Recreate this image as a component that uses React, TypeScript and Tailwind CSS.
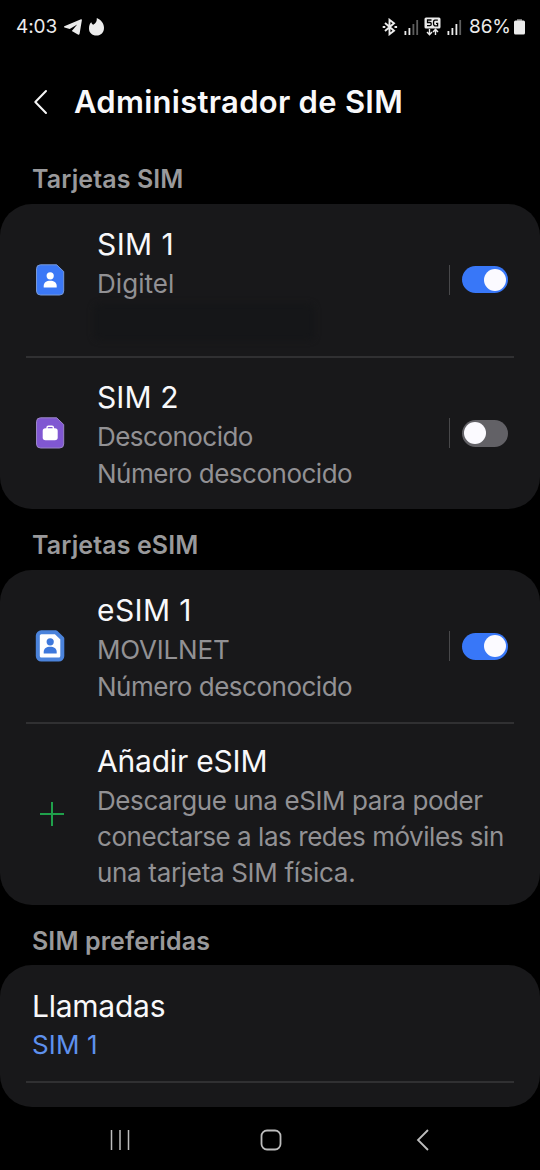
import type { ReactNode } from "react";

function StatusBar() {
  return (
    <div className="flex h-[52px] items-center justify-between pt-px pl-4 pr-[15px] text-[#ececec]">
      <div className="flex items-center">
        <span className="w-[48px] text-[19px] leading-6 tracking-[-0.1px] whitespace-nowrap">4:03</span>
        <svg width="18" height="16" viewBox="0 0 18 16" fill="currentColor">
          <path d="M.3 7.200 17 .3c.6-.2 1 .1.900.8L15.600 14.800c-.2.9-1 1.200-1.700.8L7.800 12l5.400-6.600-7.500 4.500L.5 8.500C-.1 8.200-.1 7.400.3 7.200Z" />
        </svg>
        <svg className="ml-[7px]" width="15" height="18" viewBox="0 0 15 18" fill="currentColor">
          <path d="M7.800 0c3.800 1.800 7.200 5 7.200 9.800C15 14.500 12 17.600 7.500 17.600S0 14.700 0 10.500C0 7.800.8 5.500 2.300 4.300c.3 1.200.9 1.900 1.900 2.400C7 5.600 8 3 7.800 0Z" />
        </svg>
      </div>
      <div className="flex items-center">
        <svg width="16" height="18" viewBox="0 0 16 18" fill="none" stroke="currentColor" strokeWidth="1.900">
          <path d="m3 5 9 7.700-4.500 3.500V1.800L12 5.300l-9 7.700" />
          <path d="M.7 9h2.600M12.500 9h2.600" strokeWidth="2.200" />
        </svg>
        <Signal />
        <svg className="ml-[5px]" width="17" height="20" viewBox="0 0 17 20">
          <rect x="0.500" y="0.500" width="16" height="11" rx="1.500" fill="#ececec" />
          <path d="M7.500 3H3.500v2.500H6q1.300 0 1.300 1.600T5.800 8.700H3M13.800 3.200H11Q9.500 3.200 9.500 6T11 8.800h2.600V6.300H12" fill="none" stroke="#000" strokeWidth="1.300" />
          <path d="M5.500 12v5.500M3 15l2.500 2.700L8 15M11.500 18v-5.500M9 15l2.500-2.700L14 15" fill="none" stroke="#ececec" strokeWidth="1.400" />
        </svg>
        <Signal full />
        <span className="ml-[7px] w-[43px] text-[19px] leading-6 tracking-[-0.1px] whitespace-nowrap">86%</span>
        <svg className="ml-[2px]" width="11" height="16" viewBox="0 0 11 16" fill="currentColor">
          <path d="M3 0h5v2H3z" opacity=".5" />
          <rect y="1.500" width="11" height="14" rx="1.500" />
        </svg>
      </div>
    </div>
  );
}

function Signal({ full = false }: { full?: boolean }) {
  return (
    <svg className="ml-[6px]" width="15" height="16" viewBox="0 0 15 16" fill="currentColor">
      <rect x="0.500" y="12" width="1.800" height="4" />
      <rect x="4.500" y="9" width="1.800" height="7" />
      <rect x="8.500" y="5" width="1.800" height="11" opacity={full ? 1 : 0.4} />
      <rect x="12.300" y="1" width="1.800" height="15" opacity=".4" />
    </svg>
  );
}

function SimIcon({ kind }: { kind: "person" | "bag" | "esim" }) {
  const fill = kind === "person" ? "#3b78f6" : kind === "bag" ? "#8057d2" : "#fff";
  const person = kind === "esim" ? "#3d78dc" : "#fff";
  return (
    <svg width="30" height="32" viewBox="0 0 30 32">
      {kind === "esim" ? (
        <path d="M6.300 2.300h14.500L27.300 8.500V26a3.500 3.500 0 0 1-3.500 3.500H6.300A3.500 3.500 0 0 1 2.800 26V5.800A3.500 3.500 0 0 1 6.300 2.300Z" fill={fill} stroke="#4b83db" strokeWidth="4" strokeLinejoin="round" />
      ) : (
        <path d="M5.500 .8h16.200L28.700 7.500v19.500a4 4 0 0 1-4 4H5.500a4 4 0 0 1-4-4V4.800a4 4 0 0 1 4-4Z" fill={fill} stroke={kind === "bag" ? "#9b86c6" : "#7798d6"} strokeWidth="1" strokeLinejoin="round" />
      )}
      {kind === "bag" ? (
        <>
          <path d="M12 12V10.700a1.500 1.500 0 0 1 1.500-1.500h3.400a1.500 1.500 0 0 1 1.500 1.500V12" fill="none" stroke="#fff" strokeWidth="1.400" />
          <rect x="7.700" y="11.300" width="15" height="12" rx="2.800" fill="#fff" />
        </>
      ) : (
        <>
          <circle cx="15.200" cy="11.800" r="3.600" fill={person} />
          <path d="M8.700 23.500V22c0-3.300 2.800-5.200 6.500-5.200s6.500 1.900 6.500 5.200v1.500Z" fill={person} />
        </>
      )}
    </svg>
  );
}

function Toggle({ on }: { on: boolean }) {
  return (
    <div className="flex items-center gap-3">
      <div className="h-[30px] w-px bg-[#48484a]" />
      <div className={on ? "flex h-[27px] w-[46px] items-center justify-end rounded-full bg-[#3877f8] px-[2px]" : "flex h-[27px] w-[46px] items-center justify-start rounded-full bg-[#626166] px-[2px]"}>
        <div className="size-[22px] rounded-full bg-[#fbfaff]" />
      </div>
    </div>
  );
}

function Heading({ children, className }: { children: ReactNode; className: string }) {
  return <h2 className={`pl-8 text-[25px] font-semibold tracking-[0.1px] whitespace-nowrap text-[#99999b] ${className}`}>{children}</h2>;
}

function Divider() {
  return <div className="mx-[26px] h-[2px] shrink-0 bg-[#303032]" />;
}

function SimRow({ icon, title, titleClass, lines, on, textClass }: {
  icon: "person" | "bag" | "esim";
  title: string;
  titleClass: string;
  textClass: string;
  lines: { text: string; className: string }[];
  on: boolean;
}) {
  return (
    <div className="flex h-[152px] items-center pl-[35px] pr-8">
      <SimIcon kind={icon} />
      <div className={`ml-[32px] flex h-full flex-1 flex-col ${textClass}`}>
        <span className={`text-[30px] leading-[41px] whitespace-nowrap text-[#f8f8fa] ${titleClass}`}>{title}</span>
        {lines.map((l) => (
          <span key={l.text} className={`text-[26px] leading-[37px] whitespace-nowrap text-[#929194] ${l.className}`}>{l.text}</span>
        ))}
        {lines.length === 1 && <div className="mt-[2px] -ml-[3px] h-[36px] w-[220px] rounded-md bg-[#151618] blur-[3px]" />}
      </div>
      <Toggle on={on} />
    </div>
  );
}

export default function App() {
  return (
    <div className="flex h-[1170px] w-[540px] flex-col overflow-hidden bg-black font-['Inter',sans-serif]">
      <StatusBar />
      <header className="flex h-[100px] items-center pl-[33px]">
        <svg width="15" height="26" viewBox="0 0 15 26" fill="none" stroke="#f5f5f5" strokeWidth="2" strokeLinecap="round" strokeLinejoin="round">
          <path d="M13 2 2.300 13 13 24" />
        </svg>
        <h1 className="ml-[26px] text-[31px] leading-10 font-semibold tracking-[0.28px] whitespace-nowrap text-[#f8f8fa]">Administrador de SIM</h1>
      </header>
      <Heading className="h-[52px] leading-[55px]">Tarjetas SIM</Heading>
      <section className="flex h-[305px] flex-col rounded-[32px] bg-[#18181a]">
        <SimRow icon="person" title="SIM 1" titleClass="tracking-[0.4px]" textClass="pt-[20px]" lines={[{ text: "Digitel", className: "tracking-[0.05px]" }]} on />
        <Divider />
        <SimRow icon="bag" title="SIM 2" titleClass="tracking-[0.1px]" textClass="pt-[19px]" lines={[{ text: "Desconocido", className: "tracking-[-0.53px]" }, { text: "Número desconocido", className: "tracking-[-0.49px]" }]} on={false} />
      </section>
      <Heading className="h-[61px] leading-[73px]">Tarjetas eSIM</Heading>
      <section className="flex h-[335px] flex-col rounded-[32px] bg-[#18181a]">
        <SimRow icon="esim" title="eSIM 1" titleClass="tracking-[0.4px]" textClass="pt-[20px]" lines={[{ text: "MOVILNET", className: "tracking-[-0.2px]" }, { text: "Número desconocido", className: "tracking-[-0.49px]" }]} on />
        <Divider />
        <div className="flex flex-1 items-center pl-[40px]">
          <svg className="mb-[2px]" width="24" height="26" viewBox="0 0 24 26" stroke="#1fa04b" strokeWidth="2">
            <path d="M0 13h24M12 1v24" />
          </svg>
          <div className="ml-[33px] flex h-full flex-col pt-[17px] whitespace-nowrap">
            <span className="text-[30px] leading-[41px] tracking-[-0.2px] text-[#f8f8fa]">Añadir eSIM</span>
            <span className="text-[26px] leading-[38px] tracking-[-0.41px] text-[#929194]">Descargue una eSIM para poder</span>
            <span className="text-[26px] leading-[34px] tracking-[-0.45px] text-[#929194]">conectarse a las redes móviles sin</span>
            <span className="text-[26px] leading-[37px] tracking-[-0.32px] text-[#929194]">una tarjeta SIM física.</span>
          </div>
        </div>
      </section>
      <Heading className="h-[60px] leading-[72px]">SIM preferidas</Heading>
      <section className="flex h-[142px] flex-col rounded-[32px] bg-[#18181a]">
        <div className="flex h-[116px] flex-col pt-[21px] pl-8 whitespace-nowrap">
          <span className="text-[30px] leading-[41px] tracking-[-0.25px] text-[#f8f8fa]">Llamadas</span>
          <span className="text-[26px] leading-[36px] tracking-[0.15px] text-[#5e91ee]">SIM 1</span>
        </div>
        <Divider />
      </section>
      <nav className="flex h-[63px] items-center pt-[2px] pl-[110px] text-[#bdbdbd]">
        <svg width="20" height="22" viewBox="0 0 20 22" stroke="currentColor" strokeWidth="1.500">
          <path d="M1.500 1v20M10 1v20M18.500 1v20" />
        </svg>
        <svg className="ml-[130px]" width="22" height="22" viewBox="0 0 22 22" fill="none" stroke="currentColor" strokeWidth="1.800">
          <rect x="1.500" y="1.500" width="19" height="19" rx="5.500" />
        </svg>
        <svg className="ml-[134px]" width="13" height="22" viewBox="0 0 13 22" fill="none" stroke="currentColor" strokeWidth="1.800">
          <path d="M12 1 2 11l10 10" />
        </svg>
      </nav>
    </div>
  );
}
